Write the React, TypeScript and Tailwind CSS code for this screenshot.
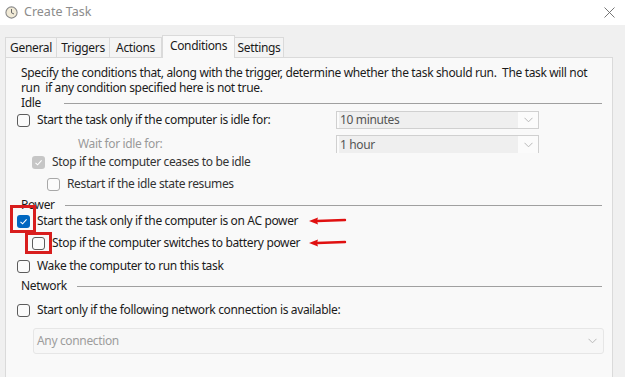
import React from 'react';

const font = { fontFamily: '"Noto Sans", "Open Sans", sans-serif' };

type BoxProps = { checked?: boolean; disabled?: boolean };

const CheckBox: React.FC<BoxProps> = ({ checked, disabled }) => {
  if (checked) {
    return (
      <span
        className={`flex h-[13px] w-[13px] shrink-0 items-center justify-center rounded-[3px] ${disabled ? 'bg-[#c6c6c6]' : 'bg-[#0067c0]'}`}
      >
        <svg width="9" height="9" viewBox="0 0 9 9">
          <path d="M1.5 4.8 L3.6 6.8 L7.6 2.4" fill="none" stroke="#fff" strokeWidth="1.1" />
        </svg>
      </span>
    );
  }
  return (
    <span
      className={`block h-[13px] w-[13px] shrink-0 rounded-[3px] border bg-[#fbfbfb] ${disabled ? 'border-[#a8a8a8]' : 'border-[#5c5c5c]'}`}
    />
  );
};

const Chevron = () => (
  <svg width="9" height="6" viewBox="0 0 9 6">
    <path d="M0.5 0.8 L4.5 4.8 L8.5 0.8" fill="none" stroke="#b8b8b8" strokeWidth="1" />
  </svg>
);

const Select = ({ label, open }: { label: string; open?: boolean }) => (
  <div
    className={`flex h-[18px] w-[203px] items-center border border-[#d0d0d0] bg-[#fbfbfb] pl-[2px] ${open ? 'border-b-0' : ''}`}
  >
    <div className="flex h-full flex-1 items-center bg-[#efefef] pl-[1px] text-[12px] leading-[16px] text-[#555]">{label}</div>
    <div className="flex w-[20px] items-center justify-center">
      <Chevron />
    </div>
  </div>
);

const Group = ({ label }: { label: string }) => (
  <div className="flex h-[16px] items-center">
    <span className="mr-[10px] min-w-[33px] text-[12px] leading-[14px] text-[#1b1b1b]">{label}</span>
    <div className="h-px flex-1 bg-[#a0a0a0]" />
  </div>
);

const Arrow = () => (
  <svg width="38" height="8" viewBox="0 0 38 8" className="absolute left-[292px] top-1/2 -translate-y-1/2">
    <path d="M0 4 L9 0.5 L8 4 L9 7.5 Z" fill="#e01010" />
    <path d="M8 4 L36 3" stroke="#e01010" strokeWidth="2.4" strokeLinecap="round" />
  </svg>
);

const tabs = ['General', 'Triggers', 'Actions', 'Conditions', 'Settings'];
const tabWidths = ['w-[52px]', 'w-[53px]', 'w-[52px]', 'w-[73px]', 'w-[49px]'];

export default function App() {
  return (
    <div className="h-[377px] w-[625px] overflow-hidden bg-[#f0f0f0] tracking-[-0.35px] text-[#1b1b1b]" style={font}>
      {/* Title bar */}
      <div className="flex h-[25px] items-center bg-white pl-[5px] pr-[10px]">
        <svg width="13" height="13" viewBox="0 0 13 13">
          <circle cx="6.5" cy="6.5" r="5.6" fill="#f1ead6" stroke="#8a8a8a" strokeWidth="1.1" />
          <path d="M6.5 3 L6.5 6.8 L9 8" fill="none" stroke="#666" strokeWidth="1" />
        </svg>
        <span className="ml-[6px] text-[12.5px] tracking-normal text-[#8c8c8c]">Create Task</span>
        <div className="flex-1" />
        <svg width="11" height="11" viewBox="0 0 11 11">
          <path d="M0.5 0.5 L10.5 10.5 M10.5 0.5 L0.5 10.5" stroke="#666" strokeWidth="0.9" />
        </svg>
      </div>

      {/* Tabs */}
      <div className="flex h-[32px] items-end pl-[5px]">
        {tabs.map((t, i) => {
          const active = t === 'Conditions';
          return (
            <div
              key={t}
              className={`${tabWidths[i]} flex items-center justify-center border-t border-r border-[#dadada] text-[12px] ${i === 0 ? 'border-l' : ''} ${
                active ? 'relative -mb-px h-[23px] border-l bg-[#f9f9f9] pb-[3px]' : 'h-[20px] bg-[#f4f4f4]'
              }`}
            >
              {t}
            </div>
          );
        })}
      </div>

      {/* Panel */}
      <div className="ml-[5px] mr-[12px] h-[330px] border border-[#dadada] bg-[#f9f9f9] pl-[11px] pr-[10px] pt-[7px]">
        <p className="whitespace-nowrap pl-[4px] text-[12px] leading-[15px]">
          Specify the conditions that, along with the trigger, determine whether the task should run.&nbsp; The task will not
          <br />
          run&nbsp; if any condition specified here is not true.
        </p>

        <div className="pl-[4px]">
          <Group label="Idle" />
        </div>

        <div className="flex h-[18px] items-center">
          <CheckBox />
          <span className="ml-[7px] w-[299px] text-[12px]">Start the task only if the computer is idle for:</span>
          <Select label="10 minutes" />
        </div>

        <div className="mt-[6px] flex h-[18px] items-center">
          <span className="w-[319px] pl-[61px] text-[12px] text-[#9a9a9a]">Wait for idle for:</span>
          <Select label="1 hour" open />
        </div>

        <div className="flex h-[18px] items-center pl-[15px]">
          <CheckBox checked disabled />
          <span className="ml-[7px] text-[12px] text-[#333]">Stop if the computer ceases to be idle</span>
        </div>

        <div className="flex h-[26px] items-center pl-[30px]">
          <CheckBox disabled />
          <span className="ml-[7px] text-[12px] text-[#333]">Restart if the idle state resumes</span>
        </div>

        <div className="pl-[4px]">
          <Group label="Power" />
        </div>

        <div className="relative flex h-[16px] items-center">
          <span className="relative">
            <CheckBox checked />
            <span className="absolute left-[-7px] top-[-10px] h-[28px] w-[26px] border-[3px] border-[#d81e1e]" />
          </span>
          <span className="ml-[7px] text-[12px]">Start the task only if the computer is on AC power</span>
          <Arrow />
        </div>

        <div className="relative flex h-[28px] items-center pl-[15px]">
          <span className="relative">
            <CheckBox />
            <span className="absolute left-[-7px] top-[-5px] h-[22px] w-[27px] border-[3px] border-[#d81e1e]" />
          </span>
          <span className="ml-[7px] text-[12px]">Stop if the computer switches to battery power</span>
          <Arrow />
        </div>

        <div className="flex h-[18px] items-center">
          <CheckBox />
          <span className="ml-[7px] text-[12px]">Wake the computer to run this task</span>
        </div>

        <div className="flex h-[22px] items-center pl-[4px]">
          <div className="flex-1">
            <Group label="Network" />
          </div>
        </div>

        <div className="flex h-[26px] items-center">
          <CheckBox />
          <span className="ml-[7px] text-[12px]">Start only if the following network connection is available:</span>
        </div>

        <div className="ml-[16px] mr-[-2px] mt-[5px] flex h-[26px] items-center rounded-[3px] border border-[#e6e6e6] bg-[#f7f7f7] pl-[3px] pr-[6px]">
          <span className="flex-1 text-[12px] text-[#9d9d9d]">Any connection</span>
          <Chevron />
        </div>
      </div>
    </div>
  );
}
